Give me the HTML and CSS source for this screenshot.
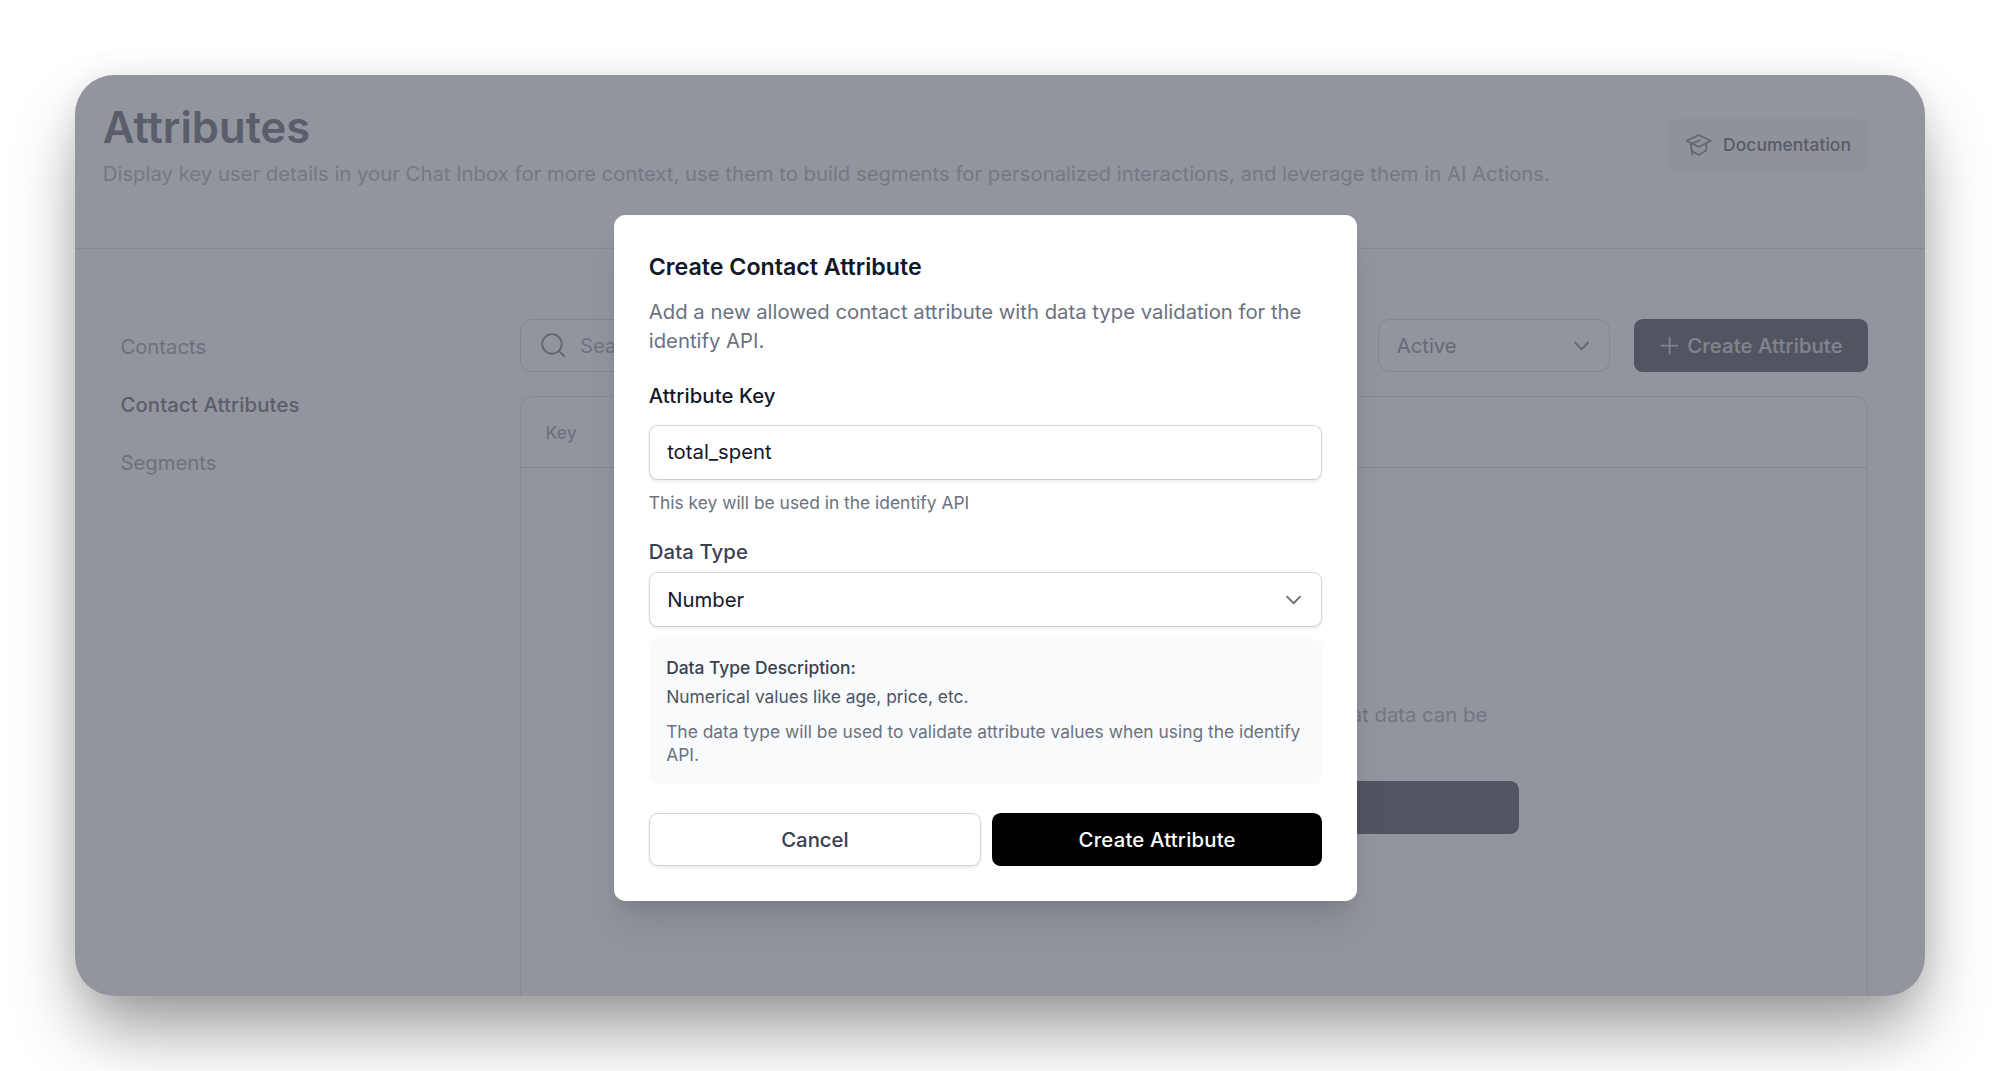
FILE: index.html
```html
<!DOCTYPE html>
<html lang="en">
<head>
<meta charset="utf-8">
<title>Attributes</title>
<link rel="stylesheet" href="styles.css">
</head>
<body>
<div class="frame">
  <header class="page-header">
    <div>
      <h1 class="page-title">Attributes</h1>
      <p class="page-sub">Display key user details in your Chat Inbox for more context, use them to build segments for personalized interactions, and leverage them in AI Actions.</p>
    </div>
    <a class="doc-btn">
      <svg class="doc-icon" viewBox="0 0 24 24" fill="none" stroke="currentColor" stroke-width="1.5" stroke-linejoin="round" stroke-linecap="round"><path d="M12 3.500 22.500 8.500 12 14 1.500 8.500Z"/><path d="M5.500 11v6L12 21l6.500-4v-6"/><path d="M13 8 5 11.500 6.500 20.500"/></svg>
      <span>Documentation</span>
    </a>
  </header>
  <div class="page-body">
    <nav class="side">
      <a class="side-item">Contacts</a>
      <a class="side-item side-active">Contact Attributes</a>
      <a class="side-item">Segments</a>
    </nav>
    <section class="content">
      <div class="toolbar">
        <div class="search">
          <svg class="search-icon" viewBox="0 0 24 24" fill="none" stroke="currentColor" stroke-width="1.700" stroke-linecap="round"><circle cx="11" cy="11" r="9"/><path d="m17.500 17.500 5 5"/></svg>
          <span>Search attributes...</span>
        </div>
        <div class="status-select">
          <span>Active</span>
          <svg class="chev" viewBox="0 0 16 16" fill="none" stroke="currentColor" stroke-width="1.300" stroke-linecap="round" stroke-linejoin="round"><path d="m3.500 6 4.500 4.500L12.500 6"/></svg>
        </div>
        <button class="create-btn">
          <svg class="plus" viewBox="0 0 16 16" fill="none" stroke="currentColor" stroke-width="1.200" stroke-linecap="round"><path d="M8 2.500v11M2.500 8h11"/></svg>
          <span>Create Attribute</span>
        </button>
      </div>
      <div class="table">
        <div class="table-head">Key</div>
        <div class="table-empty">
          <p class="empty-text">Create your first contact attribute to control what data can be</p>
          <button class="empty-btn">Create Attribute</button>
        </div>
      </div>
    </section>
  </div>
  <div class="overlay"></div>
  <div class="modal">
    <h2 class="modal-title">Create Contact Attribute</h2>
    <p class="modal-desc">Add a new allowed contact attribute with data type validation for the identify API.</p>
    <label class="label label-key">Attribute Key</label>
    <div class="field field-key">total_spent</div>
    <p class="hint">This key will be used in the identify API</p>
    <label class="label label-type">Data Type</label>
    <div class="field field-select">
      <span>Number</span>
      <svg class="chev chev-modal" viewBox="0 0 16 16" fill="none" stroke="currentColor" stroke-width="1.300" stroke-linecap="round" stroke-linejoin="round"><path d="m3.500 6 4.500 4.500L12.500 6"/></svg>
    </div>
    <div class="info">
      <p class="info-title">Data Type Description:</p>
      <p class="info-value">Numerical values like age, price, etc.</p>
      <p class="info-note">The data type will be used to validate attribute values when using the identify API.</p>
    </div>
    <div class="actions">
      <button class="btn btn-cancel">Cancel</button>
      <button class="btn btn-primary">Create Attribute</button>
    </div>
  </div>
</div>
</body>
</html>
```
FILE: styles.css
```css
* { box-sizing: border-box; }
html, body { margin: 0; padding: 0; }
body {
  height: 1071px;
  overflow: hidden;
  background: #fff;
  padding: 75px;
  font-family: Inter, "Liberation Sans", sans-serif;
}
p, h1, h2 { margin: 0; }
button { font-family: inherit; }

.frame {
  zoom: 1.45;
  position: relative;
  width: 1275.9px;
  height: 635.2px;
  overflow: hidden;
  background: #fff;
  border-radius: 27px;
  box-shadow: 0 28px 48px -6px rgba(0,0,0,.4), 0 0 22px rgba(0,0,0,.08);
}

.page-header {
  height: 120px;
  padding: 18px 39px 0 19.200px;
  display: flex;
  justify-content: space-between;
  align-items: flex-start;
  border-bottom: 1px solid #e7e9ee;
}
.page-title {
  font-size: 30px;
  line-height: 36px;
  font-weight: 600;
  color: #97999f;
}
.page-sub {
  margin-top: 4px;
  font-size: 14px;
  line-height: 20px;
  color: #cbccd0;
}
.doc-btn {
  margin-top: 12px;
  height: 36px;
  width: 139px;
  flex: none;
  display: flex;
  align-items: center;
  gap: 7.200px;
  padding-left: 12.500px;
  background: #f8f9fa;
  border-radius: 8px;
  font-size: 12px;
  font-weight: 500;
  letter-spacing: .005em;
  color: #94969c;
}
.doc-icon { width: 19px; height: 19px; color: #a9abb1; }

.page-body {
  display: flex;
  padding: 48px 39.500px 0 19.500px;
}
.side {
  width: 287.600px;
  flex: none;
  margin-top: -.7px;
  display: flex;
  flex-direction: column;
}
.side-item {
  height: 40px;
  padding-left: 11.800px;
  display: flex;
  align-items: center;
  font-size: 14px;
  color: #bdbec3;
}
.side-active { color: #98999f; font-weight: 500; letter-spacing: .007em; }

.content { flex: 1; min-width: 0; }
.toolbar { display: flex; gap: 16px; height: 37px; }
.search {
  flex: 1;
  display: flex;
  align-items: center;
  gap: 9.500px;
  padding-left: 13px;
  border: 1px solid #e2e3e8;
  border-radius: 8px;
  font-size: 14px;
  color: #c2c3c8;
}
.search-icon { width: 18px; height: 18px; color: #a7a9af; }
.status-select {
  width: 160px;
  margin-right: .9px;
  display: flex;
  align-items: center;
  justify-content: space-between;
  padding: 0 11px 0 12.300px;
  border: 1px solid #e2e3e8;
  border-radius: 8px;
  font-size: 14px;
  color: #aeb0b6;
}
.chev { width: 16px; height: 16px; color: #a9abb1; }
.create-btn {
  width: 161px;
  display: flex;
  align-items: center;
  gap: 4.500px;
  padding: 0 0 0 16px;
  border: 0;
  border-radius: 6px;
  background: #89898e;
  font-size: 14px;
  font-weight: 500;
  letter-spacing: .005em;
  color: #e0e0e0;
}
.plus { width: 16px; height: 16px; }

.table {
  margin-top: 16.500px;
  height: 500px;
  border: 1px solid #e7e9ee;
  border-radius: 8px;
}
.table-head {
  height: 49px;
  padding-left: 16.700px;
  display: flex;
  align-items: center;
  border-bottom: 1px solid #e2e3e8;
  font-size: 12px;
  font-weight: 500;
  color: #c0c1c6;
}
.table-empty {
  display: flex;
  flex-direction: column;
  align-items: center;
  padding-top: 160px;
}
.empty-text {
  font-size: 14px;
  line-height: 20px;
  white-space: nowrap;
  color: #c6c7cb;
}
.empty-btn {
  margin-top: 36px;
  width: 448px;
  height: 36px;
  border: 0;
  border-radius: 6px;
  background: #89898e;
  color: #e0e0e0;
  font-size: 14px;
  font-weight: 500;
}

.overlay {
  position: absolute;
  inset: 0;
  background: rgba(17,24,44,.46);
}
.modal {
  position: absolute;
  left: 371.700px;
  top: 96.700px;
  width: 512.500px;
  height: 472.800px;
  padding: 24.200px 24px 24px;
  background: #fff;
  border-radius: 8px;
  box-shadow: 0 20px 25px -5px rgba(0,0,0,.1), 0 8px 10px -6px rgba(0,0,0,.1);
}
.modal-title {
  font-size: 16px;
  line-height: 24px;
  font-weight: 600;
  color: #111827;
}
.modal-desc {
  margin-top: 8px;
  font-size: 14px;
  line-height: 20px;
  color: #6b7280;
}
.label {
  display: block;
  font-size: 14px;
  line-height: 20px;
  font-weight: 500;
  letter-spacing: .005em;
}
.label-key { margin-top: 18px; color: #111827; }
.label-type { margin-top: 16px; color: #374151; }
.field {
  height: 38px;
  display: flex;
  align-items: center;
  justify-content: space-between;
  padding: 0 11px 0 12px;
  border: 1px solid #d1d5db;
  border-bottom-color: #c9ced6;
  border-radius: 6px;
  box-shadow: 0 1px 2px rgba(0,0,0,.07);
  font-size: 14px;
  color: #111827;
}
.field-key { margin-top: 10.500px; padding-bottom: 2px; }
.field-select { margin-top: 4px; }
.chev-modal { color: #6b7280; }
.hint {
  margin-top: 7.500px;
  font-size: 12px;
  line-height: 16px;
  color: #6b7280;
}
.info {
  margin-top: 8px;
  height: 100px;
  padding: 11.500px 10px 12px 12px;
  background: #f9fafb;
  border-radius: 6px;
  font-size: 12px;
  line-height: 16px;
}
.info-title { font-weight: 500; color: #374151; }
.info-value { margin-top: 4px; color: #4b5563; }
.info-note { margin-top: 8.200px; color: #6b7280; }
.actions { display: flex; gap: 8px; margin-top: 20px; }
.btn {
  flex: 1;
  height: 36.500px;
  border-radius: 6px;
  font-size: 14px;
  font-weight: 500;
}
.btn-cancel {
  margin-right: .3px;
  background: #fff;
  border: 1px solid #d1d5db;
  box-shadow: 0 1px 2px rgba(0,0,0,.07);
  color: #374151;
}
.btn-primary {
  margin-left: -.8px;
  background: #000;
  border: 0;
  color: #fff;
  letter-spacing: .01em;
}
```
